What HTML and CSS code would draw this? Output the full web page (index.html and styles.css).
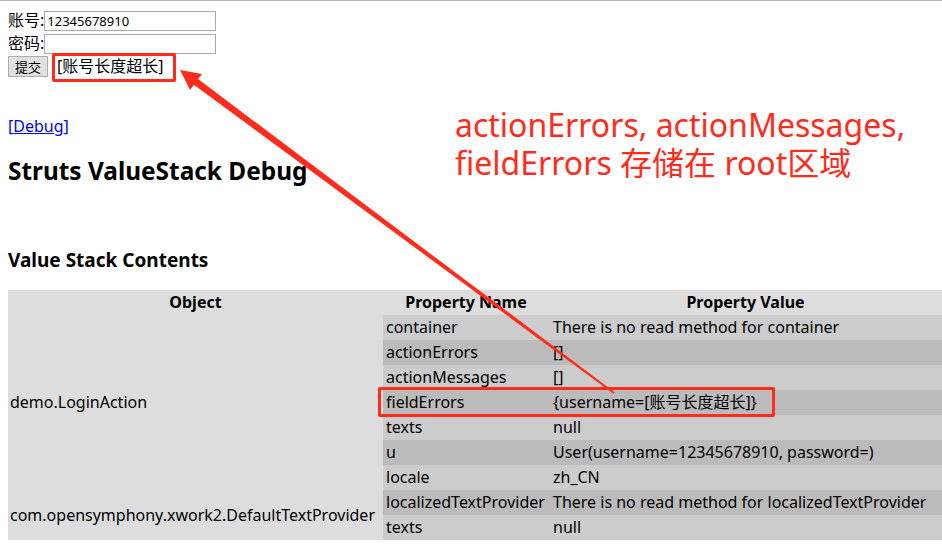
FILE: index.html
```html
<!DOCTYPE html>
<html lang="zh">
<head>
<meta charset="utf-8">
<title>Struts ValueStack Debug</title>
<link rel="stylesheet" href="styles.css">
</head>
<body>
<form class="login">
  <div class="row"><span class="lbl">账号:</span><input class="txt" type="text" value="12345678910"></div>
  <div class="row"><span class="lbl">密码:</span><input class="txt" type="password" value=""></div>
  <div class="row"><button class="btn" type="button">提交</button><span class="err">[账号长度超长]</span></div>
</form>

<p class="debug">[<a href="#">Debug</a>]</p>

<h1 class="title">Struts ValueStack Debug</h1>

<h3 class="subtitle">Value Stack Contents</h3>

<table class="stack">
  <colgroup><col class="c-obj"><col class="c-name"><col class="c-val"></colgroup>
  <thead>
    <tr><th>Object</th><th>Property Name</th><th>Property Value</th></tr>
  </thead>
  <tbody>
    <tr><td class="obj" rowspan="7">demo.LoginAction</td><td class="p odd">container</td><td class="v odd">There is no read method for container</td></tr>
    <tr><td class="p even">actionErrors</td><td class="v even">[]</td></tr>
    <tr><td class="p odd">actionMessages</td><td class="v odd">[]</td></tr>
    <tr><td class="p even">fieldErrors</td><td class="v even">{username=[账号长度超长]}</td></tr>
    <tr><td class="p odd">texts</td><td class="v odd">null</td></tr>
    <tr><td class="p even">u</td><td class="v even">User(username=12345678910, password=)</td></tr>
    <tr><td class="p odd">locale</td><td class="v odd">zh_CN</td></tr>
    <tr><td class="obj" rowspan="2">com.opensymphony.xwork2.DefaultTextProvider</td><td class="p even">localizedTextProvider</td><td class="v even">There is no read method for localizedTextProvider</td></tr>
    <tr><td class="p odd">texts</td><td class="v odd">null</td></tr>
  </tbody>
</table>

<div class="note">
  <div class="note-line">actionErrors, actionMessages,</div>
  <div class="note-line">fieldErrors 存储在 root区域</div>
</div>
<div class="mark mark-err"></div>
<div class="mark mark-row"></div>
<svg class="arrow" width="942" height="544" viewBox="0 0 942 544" xmlns="http://www.w3.org/2000/svg">
  <polygon points="180,70 202,73.9 198.1,79.1 614.6,392.2 613.4,393.8 193.9,84.7 190.1,89.9" fill="#ff2b1c"/>
</svg>
</body>
</html>
```

FILE: styles.css
```css
html {
  border-top: 1px solid #b4b4b4;
  overflow: hidden;
}

body {
  margin: 8px 0 0 8px;
  font-family: "Noto Sans", "Noto Sans CJK SC", sans-serif;
  font-size: 16px;
  color: #000;
  background: #fff;
}

.login {
  margin: 0;
}

.row {
  display: flex;
  align-items: center;
  height: 23px;
}

.lbl {
  line-height: 23px;
}

.txt {
  box-sizing: border-box;
  width: 172px;
  height: 20px;
  margin: 0;
  padding: 0 2px;
  border: 1px solid #a9a9a9;
  font-family: "Noto Sans", "Noto Sans CJK SC", sans-serif;
  font-size: 13px;
  color: #000;
  background: #fff;
}

.btn {
  box-sizing: border-box;
  width: 40px;
  height: 21px;
  margin: 0;
  padding: 0;
  border: 1px solid #adadad;
  background: #e1e1e1;
  font-family: "Noto Sans CJK SC", sans-serif;
  font-size: 13px;
  color: #000;
}

.err {
  margin-left: 9px;
  line-height: 23px;
}

.debug {
  margin: 37px 0 0;
  line-height: 22px;
  color: #0000ee;
}

.debug a {
  color: #0000ee;
}

.title {
  margin: 19px 0 0;
  font-size: 24.4px;
  line-height: 30px;
  font-weight: bold;
}

.subtitle {
  margin: 62px 0 18px;
  font-size: 19px;
  line-height: 24px;
  font-weight: bold;
}

.stack {
  width: 100%;
  table-layout: fixed;
  border-collapse: collapse;
  border-spacing: 0;
  background: #dddddd;
}

.c-obj { width: 375px; }
.c-name { width: 166px; }
.c-val { width: auto; }

.stack th,
.stack td {
  height: 21px;
  padding: 2px 3px;
  line-height: 21px;
  white-space: nowrap;
  overflow: visible;
}

.stack th {
  text-align: center;
  font-weight: bold;
}

.stack td {
  text-align: left;
  vertical-align: middle;
}

.stack td.obj {
  padding-left: 2px;
}

.stack td.v {
  padding-left: 4px;
}

.odd { background: #cccccc; }
.even { background: #bbbbbb; }

.note {
  position: absolute;
  left: 455px;
  top: 106px;
  font-size: 32px;
  color: #ff2b1c;
  white-space: nowrap;
}

.note-line {
  height: 38px;
  line-height: 38px;
}

.mark {
  position: absolute;
  box-sizing: border-box;
  border: 3px solid #ff2b1c;
  border-radius: 2px;
}

.mark-err {
  left: 52px;
  top: 53px;
  width: 124px;
  height: 29px;
}

.mark-row {
  left: 378px;
  top: 387px;
  width: 397px;
  height: 30px;
}

.arrow {
  position: absolute;
  left: 0;
  top: 0;
  pointer-events: none;
}
```
